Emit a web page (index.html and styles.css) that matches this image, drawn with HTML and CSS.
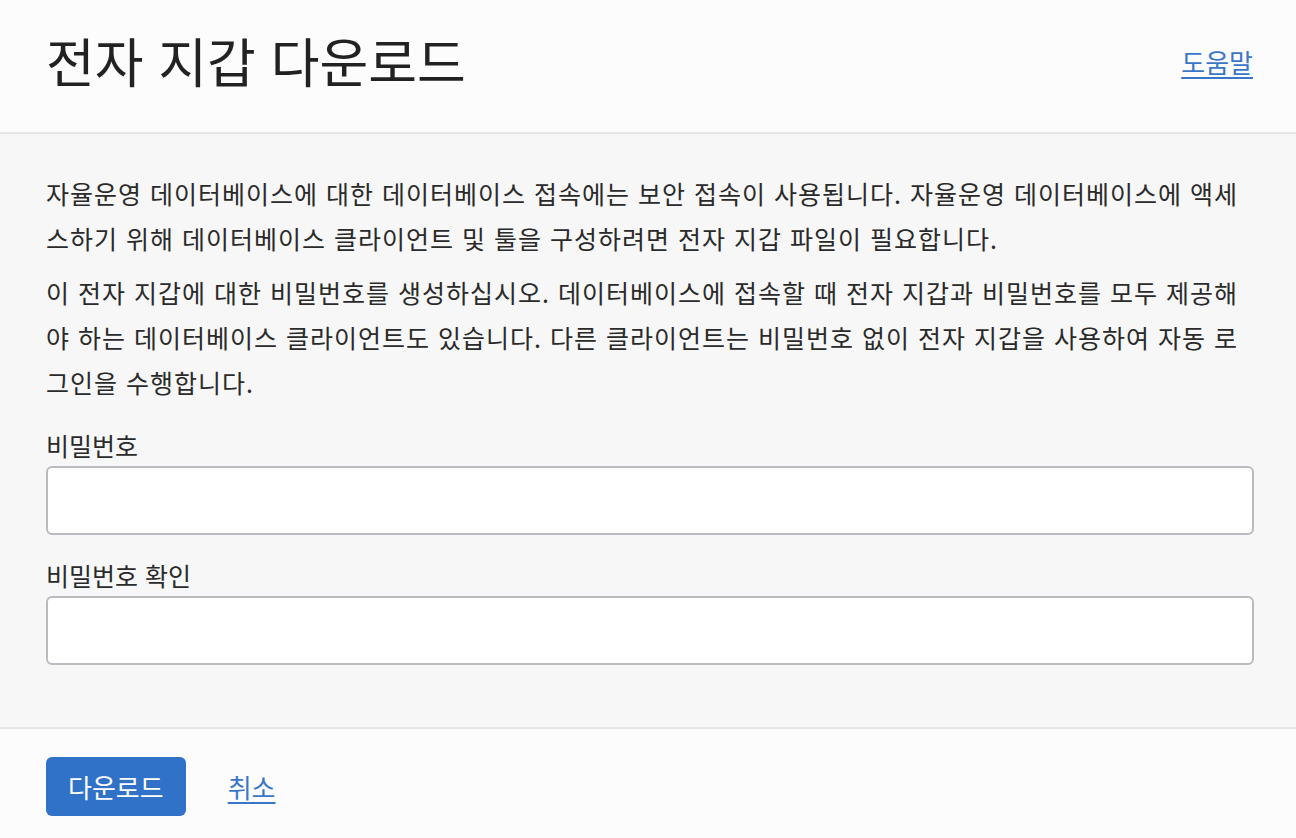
FILE: index.html
```html
<!DOCTYPE html>
<html lang="ko">
<head>
<meta charset="utf-8">
<title>전자 지갑 다운로드</title>
<link rel="stylesheet" href="styles.css">
</head>
<body>
<div class="dialog">
  <header class="dialog-header">
    <h1 class="dialog-title">전자 지갑 다운로드</h1>
    <a class="link help-link" href="#">도움말</a>
  </header>
  <main class="dialog-body">
    <p class="desc">자율운영 데이터베이스에 대한 데이터베이스 접속에는 보안 접속이 사용됩니다. 자율운영 데이터베이스에 액세<br>스하기 위해 데이터베이스 클라이언트 및 툴을 구성하려면 전자 지갑 파일이 필요합니다.</p>
    <p class="desc">이 전자 지갑에 대한 비밀번호를 생성하십시오. 데이터베이스에 접속할 때 전자 지갑과 비밀번호를 모두 제공해<br>야 하는 데이터베이스 클라이언트도 있습니다. 다른 클라이언트는 비밀번호 없이 전자 지갑을 사용하여 자동 로<br>그인을 수행합니다.</p>
    <div class="field">
      <label class="field-label" for="pw">비밀번호</label>
      <input class="field-input" id="pw" type="password">
    </div>
    <div class="field">
      <label class="field-label" for="pw2">비밀번호 확인</label>
      <input class="field-input" id="pw2" type="password">
    </div>
  </main>
  <footer class="dialog-footer">
    <button class="btn-primary" type="button">다운로드</button>
    <a class="link cancel-link" href="#">취소</a>
  </footer>
</div>
</body>
</html>
```

FILE: styles.css
```css
* { box-sizing: border-box; }
html, body { margin: 0; padding: 0; }
body {
  font-family: "Noto Sans CJK KR", "Noto Sans", sans-serif;
  color: #2a2a2a;
  background: #fcfcfc;
}
.dialog {
  display: flex;
  flex-direction: column;
  min-height: 838px;
}
.dialog-header {
  height: 134px;
  display: flex;
  align-items: center;
  justify-content: space-between;
  padding: 0 43px 12px 46px;
  background: #fcfcfc;
  border-bottom: 2px solid #e6e6e6;
}
.dialog-title {
  margin: 0;
  font-size: 53px;
  font-weight: 400;
  letter-spacing: 0;
  color: #222;
  line-height: 1;
}
.link {
  color: #3a76c8;
  text-decoration: underline;
  text-underline-offset: 4px;
  text-decoration-thickness: 2px;
  font-size: 26px;
}
.help-link { margin-top: 2px; }
.dialog-body {
  background: #f7f7f7;
  padding: 37px 42px 62px 46px;
  border-bottom: 2px solid #e6e6e6;
}
.desc {
  margin: 0 0 9px;
  font-size: 25px;
  line-height: 45px;
  letter-spacing: 1px;
  word-spacing: 0;
  color: #2a2a2a;
}
.field { display: flex; flex-direction: column; }
.field:first-of-type { margin-top: 23px; }
.field + .field { margin-top: 23px; }
.field-label {
  font-size: 25px;
  line-height: 34px;
  margin-bottom: 4px;
  color: #2a2a2a;
}
.field-input {
  height: 69px;
  width: 100%;
  border: 2px solid #b8bbc0;
  border-radius: 6px;
  background: #fff;
  font-size: 24px;
  padding: 0 14px;
  outline: none;
}
.dialog-footer {
  flex: 1;
  display: flex;
  align-items: flex-start;
  gap: 42px;
  padding: 28px 46px 0;
  background: #fcfcfc;
}
.btn-primary {
  height: 59px;
  padding: 0 22px;
  border: none;
  border-radius: 6px;
  background: #3172c9;
  color: #fff;
  font-family: inherit;
  font-size: 26px;
  cursor: pointer;
}
.cancel-link { line-height: 59px; }
```
